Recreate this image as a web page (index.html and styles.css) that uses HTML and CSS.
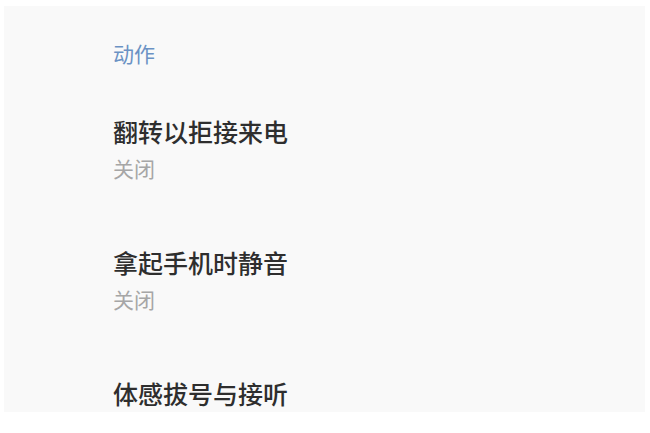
FILE: index.html
```html
<!DOCTYPE html>
<html lang="zh-CN">
<head>
<meta charset="utf-8">
<title>动作</title>
<link rel="stylesheet" href="styles.css">
</head>
<body>
<div class="panel">
  <div class="section-title">动作</div>
  <div class="list">
    <div class="item">
      <div class="item-title">翻转以拒接来电</div>
      <div class="item-sub">关闭</div>
    </div>
    <div class="item">
      <div class="item-title">拿起手机时静音</div>
      <div class="item-sub">关闭</div>
    </div>
    <div class="item">
      <div class="item-title">体感拔号与接听</div>
    </div>
  </div>
</div>
</body>
</html>
```

FILE: styles.css
```css
html, body {
  margin: 0;
  padding: 0;
  background: #ffffff;
}
body {
  font-family: "Noto Sans CJK SC", "Noto Sans", sans-serif;
  width: 650px;
  height: 433px;
  overflow: hidden;
}
.panel {
  margin: 6px 5px 0 4px;
  height: 406px;
  background: #f9f9f9;
  overflow: hidden;
  padding-left: 109px;
  padding-top: 32px;
  box-sizing: border-box;
}
.section-title {
  font-size: 21px;
  line-height: 30px;
  color: #6b92c4;
}
.list {
  display: flex;
  flex-direction: column;
  gap: 62px;
  margin-top: 46px;
}
.item {
  display: flex;
  flex-direction: column;
  gap: 5px;
}
.item-title {
  font-size: 25px;
  line-height: 34px;
  font-weight: 500;
  color: #2e2e2e;
}
.item-sub {
  font-size: 21px;
  line-height: 30px;
  color: #a6a6a6;
}
```
